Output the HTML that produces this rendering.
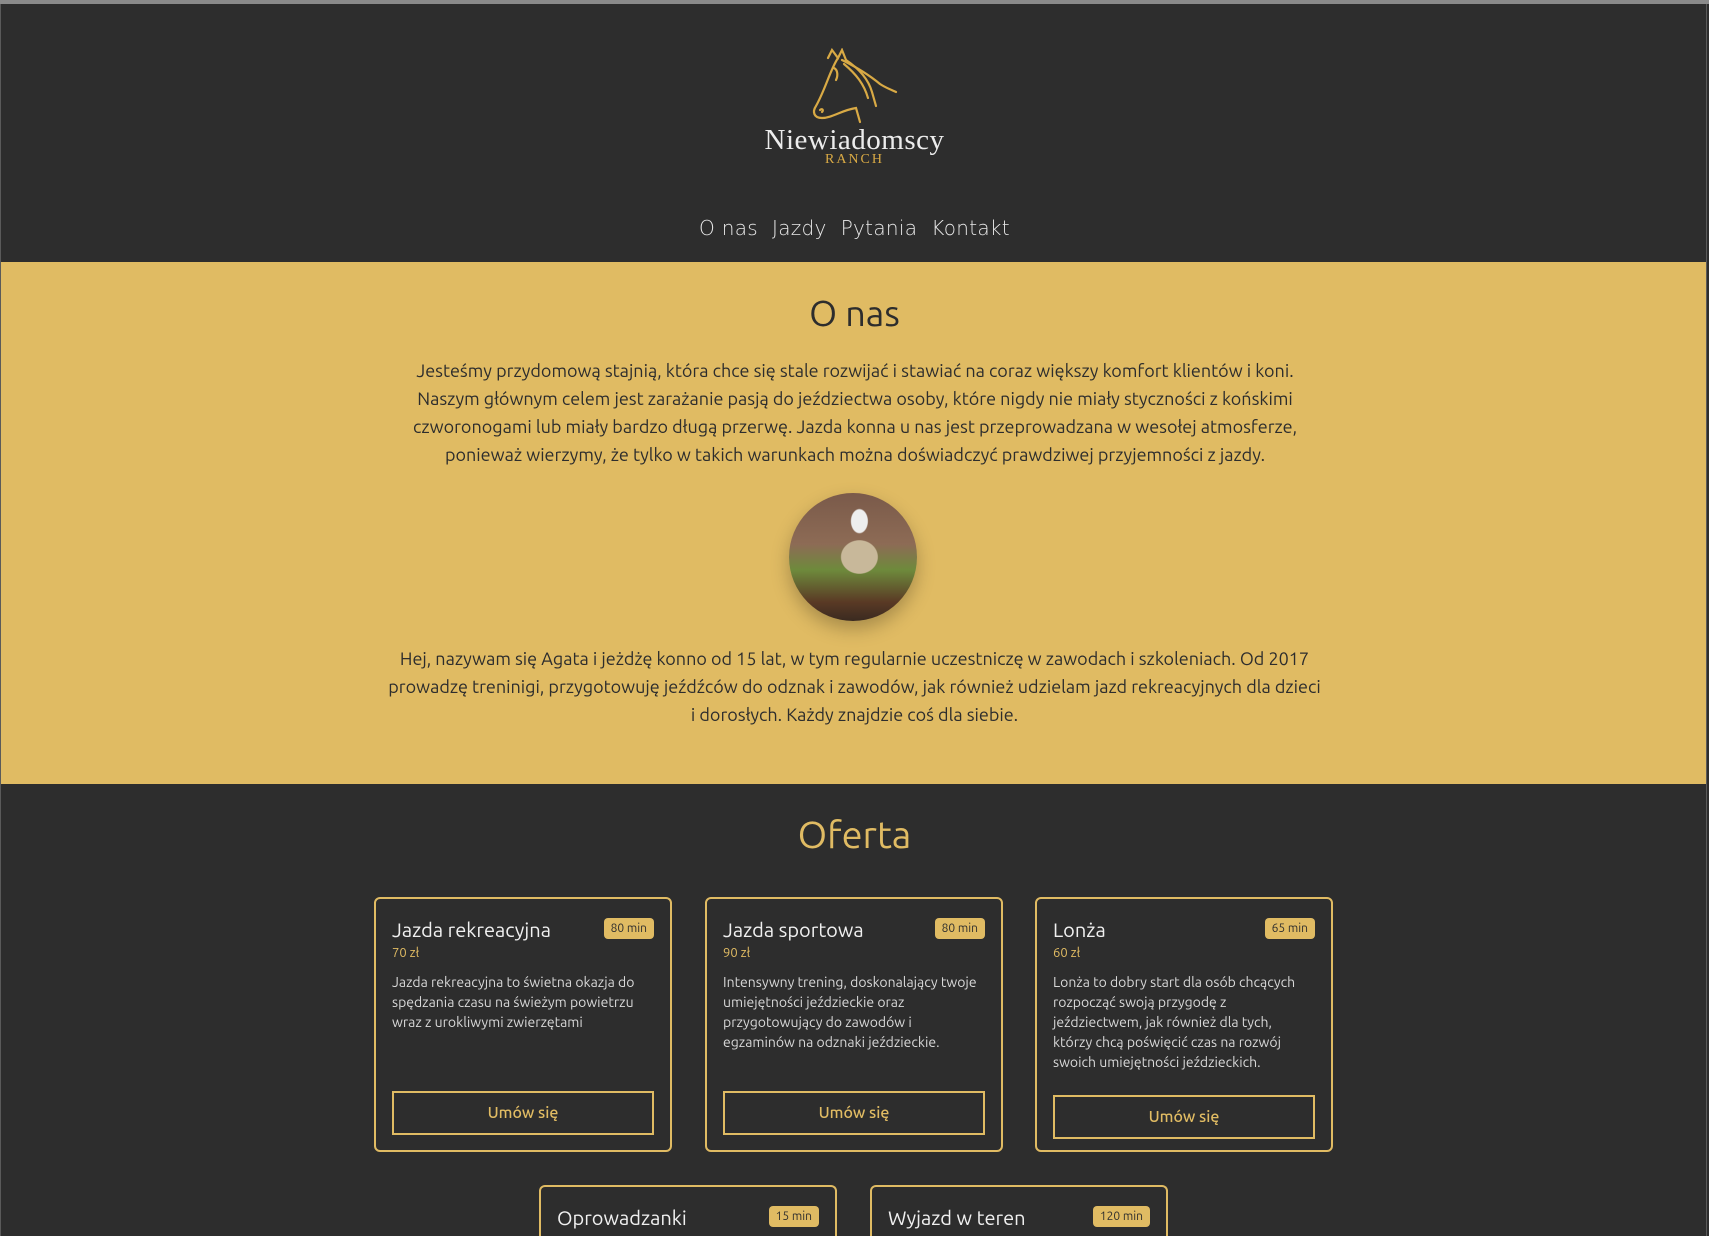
<!DOCTYPE html>
<html><head><meta charset="utf-8"><style>
*{box-sizing:border-box;margin:0;padding:0}
html{width:1709px;height:1236px;overflow:hidden}
body{width:1709px;height:1236px;overflow:hidden;background:#2d2d2d;font-family:"Ubuntu","Liberation Sans","DejaVu Sans",sans-serif;position:relative}
.top{position:absolute;left:0;top:0;width:1709px;height:4px;background:#8a8a8a}
.frame{position:absolute;top:4px;bottom:0;width:1px;background:#5a5a5a}
.logo{position:absolute;left:0;width:1709px;text-align:center}
.nav{position:absolute;top:216px;left:0;width:1709px;text-align:center;color:#e8e8e8;font-family:"DejaVu Sans",sans-serif;font-size:20px;font-weight:200;letter-spacing:.3px}
.nav span{margin:0 7px}
.yellow{position:absolute;top:262px;left:1px;width:1705px;height:522px;background:#e0bb63}
h2{position:absolute;left:0;width:1709px;text-align:center;font-weight:400}
.p{position:absolute;text-align:center;color:#2d2d2d;font-size:18px;line-height:28px}
.photo{position:absolute;left:789px;top:493px;width:128px;height:128px;border-radius:50%;background:radial-gradient(ellipse at 55% 22%,#eee 0 8%,transparent 9%),radial-gradient(ellipse at 55% 50%,#c8b89a 0 18%,transparent 19%),linear-gradient(180deg,#7a5a4a 0,#8d6b55 40%,#6e8a3c 60%,#5a3a25 85%,#3a2a20 100%);box-shadow:0 8px 18px rgba(0,0,0,.25)}
.card{position:absolute;width:298px;height:255px;border:2px solid #e0bb63;border-radius:6px;padding:0 16px;overflow:hidden}
.card.cut{height:51px;border-bottom:none;border-radius:6px 6px 0 0}
.card .t{position:absolute;left:16px;top:19px;color:#f0f0f0;font-size:20px}
.card .b{position:absolute;right:16px;top:19px;background:#e0bb63;color:#2d2d2d;font-size:12px;padding:4px 7px;border-radius:4px}
.card .pr{position:absolute;left:16px;top:47px;color:#e0bb63;font-size:13px}
.card .d{position:absolute;left:16px;right:16px;top:73px;color:#d8d8d8;font-size:14px;line-height:20px}
.card .btn{position:absolute;left:16px;right:16px;top:192px;height:44px;border:2px solid #e0bb63;color:#e0bb63;font-size:16px;text-align:center;line-height:40px;font-weight:500}
</style></head><body>
<div class="top"></div>
<div class="frame" style="left:0"></div><div class="frame" style="left:1706px"></div>
<svg style="position:absolute;left:808px;top:48px" width="92" height="80" viewBox="0 0 92 80" fill="none" stroke="#d9aa45" stroke-width="2.2" stroke-linecap="round">
<path d="M20 10 L24 2 L30 10 L34 2 L38 12"/>
<path d="M30 10 C22 22 18 40 8 58 C4 64 6 70 14 70 C24 70 34 62 48 60 L52 74"/>
<path d="M38 12 C50 20 60 30 64 44 L68 58"/>
<path d="M34 12 C46 18 60 26 72 36 C78 40 84 42 88 44"/>
<path d="M36 16 C48 26 56 36 60 50"/>
<path d="M26 20 C30 22 30 28 28 32"/>
<path d="M12 62 C14 60 16 62 14 64"/>
</svg>
<div class="logo" style="top:124px;color:#ececec;font-family:'Liberation Serif',serif;font-size:29px;letter-spacing:.5px">Niewiadomscy</div>
<div class="logo" style="top:152px;color:#d9aa45;font-family:'Liberation Serif',serif;font-size:14px;letter-spacing:2px">RANCH</div>
<div class="nav"><span>O nas</span><span>Jazdy</span><span>Pytania</span><span>Kontakt</span></div>
<div class="yellow"></div>
<h2 style="top:292px;font-size:36px;color:#2d2d2d">O nas</h2>
<div class="p" style="left:395px;width:920px;top:357px">Jesteśmy przydomową stajnią, która chce się stale rozwijać i stawiać na coraz większy komfort klientów i koni. Naszym głównym celem jest zarażanie pasją do jeździectwa osoby, które nigdy nie miały styczności z końskimi czworonogami lub miały bardzo długą przerwę. Jazda konna u nas jest przeprowadzana w wesołej atmosferze, ponieważ wierzymy, że tylko w takich warunkach można doświadczyć prawdziwej przyjemności z jazdy.</div>
<div class="photo"></div>
<div class="p" style="left:372px;width:965px;top:645px">Hej, nazywam się Agata i jeżdżę konno od 15 lat, w tym regularnie uczestniczę w zawodach i szkoleniach. Od 2017 prowadzę treninigi, przygotowuję jeźdźców do odznak i zawodów, jak również udzielam jazd rekreacyjnych dla dzieci<br>i dorosłych. Każdy znajdzie coś dla siebie.</div>
<h2 style="top:814px;font-size:38px;color:#e0bb63">Oferta</h2>
<div class="card" style="left:374px;top:897px"><div class="t">Jazda rekreacyjna</div><div class="b">80 min</div><div class="pr">70 zł</div><div class="d">Jazda rekreacyjna to świetna okazja do spędzania czasu na świeżym powietrzu wraz z urokliwymi zwierzętami</div><div class="btn">Umów się</div></div>
<div class="card" style="left:705px;top:897px"><div class="t">Jazda sportowa</div><div class="b">80 min</div><div class="pr">90 zł</div><div class="d">Intensywny trening, doskonalający twoje umiejętności jeździeckie oraz przygotowujący do zawodów i egzaminów na odznaki jeździeckie.</div><div class="btn">Umów się</div></div>
<div class="card" style="left:1035px;top:897px"><div class="t">Lonża</div><div class="b">65 min</div><div class="pr">60 zł</div><div class="d" style="right:22px">Lonża to dobry start dla osób chcących rozpocząć swoją przygodę z jeździectwem, jak również dla tych, którzy chcą poświęcić czas na rozwój swoich umiejętności jeździeckich.</div><div class="btn" style="top:196px">Umów się</div></div>
<div class="card cut" style="left:539px;top:1185px"><div class="t">Oprowadzanki</div><div class="b">15 min</div></div>
<div class="card cut" style="left:870px;top:1185px"><div class="t">Wyjazd w teren</div><div class="b">120 min</div></div>
</body></html>
